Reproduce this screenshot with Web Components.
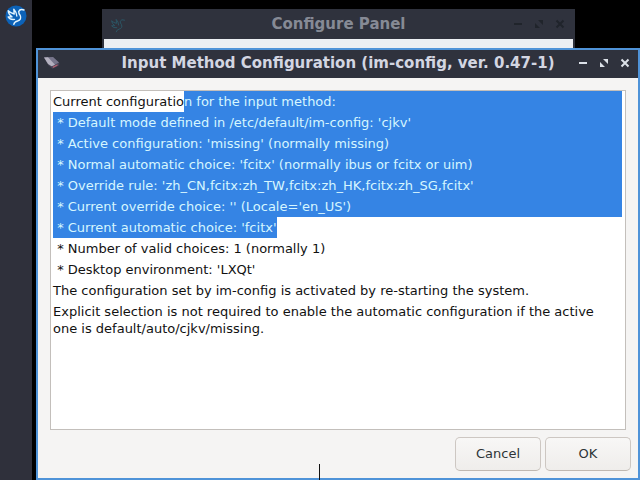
<!DOCTYPE html>
<html lang="en">
<head>
<meta charset="utf-8">
<title>Input Method Configuration</title>
<style>
html, body { height: 100%; margin: 0; }
body { background: #000; overflow: hidden; font: 13px/17px "DejaVu Sans", sans-serif; color: #111; }
</style>
</head>
<body>
<desk-top>
  <side-panel slot="panel"></side-panel>
  <app-window class="back" slot="windows" heading="Configure Panel" inactive>
    <bird-icon slot="icon"></bird-icon>
  </app-window>
  <app-window class="front" slot="windows" heading="Input Method Configuration (im-config, ver. 0.47-1)">
    <config-icon slot="icon"></config-icon>
    <config-dialog></config-dialog>
  </app-window>
</desk-top>

<script>
const define = (name, html, setup) => customElements.define(name, class extends HTMLElement {
  constructor() {
    super();
    const template = document.createElement('template');
    template.innerHTML = html;
    this.attachShadow({ mode: 'open' }).append(template.content.cloneNode(true));
    if (setup) setup(this);
  }
});

define('bird-icon', `
<style>
:host { display: block; width: var(--bird-size, 18px); height: var(--bird-size, 18px); color: var(--bird, #2b5665); }
svg { display: block; width: 100%; height: 100%; }
.disc { fill: var(--disc, none); }
.body { stroke-width: var(--bird-stroke, 1.2); }
</style>
<svg viewBox="0 0 22 22" aria-hidden="true">
  <circle class="disc" cx="11" cy="11" r="10.5"/>
  <path class="body" fill="none" stroke="currentColor" stroke-linecap="round" stroke-linejoin="round" d="M11.8 11Q11.5 7 8.8 4.2L9.2 9Q5.5 8.2 3.2 5.8Q3.5 9.5 7 11.8L3.2 12Q5 15 9.5 14.4M19 5Q15 3.4 13.7 6.5Q13.6 8.5 15.2 10.5Q17 14.6 12.5 16Q9.3 16.8 8.8 19.3"/>
</svg>`);

define('config-icon', `
<style>
:host { display: block; width: 18px; height: 18px; }
svg { display: block; width: 100%; height: 100%; }
</style>
<svg viewBox="0 0 18 18" aria-hidden="true">
  <path d="M1 2.5L10 2 16.5 8 16 10.5 9.5 13.8 5.5 10.5Z" fill="#454355"/>
  <path d="M1 2.5L10 2 16 7.5 9.5 11Z" fill="#77758b"/>
  <path d="M1 2.5L5 2.2 12 9.7 8.5 11.3 5 9Z" fill="#b4b1c0"/>
  <path d="M9.5 11.7L14.5 9.2 14.5 10.7 10 13Z" fill="#b06070"/>
</svg>`);

define('side-panel', `
<style>
:host { display: block; background: #2f303b; padding: 5px 5px 0; width: 22px; --bird: #e4f5ff; --disc: #0c62b8; --bird-size: 22px; --bird-stroke: 1.4; }
button { display: block; border: 0; padding: 0; background: none; }
</style>
<button type="button" aria-label="Application menu"><bird-icon></bird-icon></button>`);

define('desk-top', `
<style>
:host { display: flex; position: relative; height: 100%; overflow: hidden; background: #000; }
::slotted(.back) { position: absolute; left: 102px; right: 65px; top: 9px; bottom: 60px; }
::slotted(.front) { position: absolute; left: 36px; right: 0; top: 48px; bottom: 0; }
.pointer { position: absolute; left: 319px; bottom: 0; width: 1px; height: 16px; background: #111; }
</style>
<slot name="panel"></slot>
<slot name="windows"></slot>
<div class="pointer"></div>`);

define('app-window', `
<style>
:host { display: flex; flex-direction: column; box-sizing: border-box; border: 2px solid #4f93d8; background: #f5f4f3; color: #d3d6e2; }
:host([inactive]) { border-color: #2f323d; background: #eceff3; color: #868a95; --control: #20242b; }
header { display: grid; grid-template-columns: 61px 1fr 61px; align-items: center; height: 28px; background: #2f323d; }
h1 { margin: 0; padding-bottom: 2px; font: bold 15px/17px "DejaVu Sans", sans-serif; text-align: center; white-space: nowrap; }
.icon { padding-left: 5px; }
.controls { display: flex; justify-content: end; gap: 9px; padding: 0 7px 2px 0; }
button { border: 0; padding: 0; width: 12px; height: 12px; background: none; color: var(--control, #dce1e8); }
svg { display: block; width: 12px; height: 12px; }
main { flex: 1; min-height: 0; display: flex; color: #111; }
</style>
<header>
  <div class="icon"><slot name="icon"></slot></div>
  <h1></h1>
  <div class="controls">
    <button type="button" aria-label="Minimize"><svg viewBox="0 0 12 12"><path d="M2 5h8v2H2z" fill="currentColor"/></svg></button>
    <button type="button" aria-label="Maximize"><svg viewBox="0 0 12 12"><path d="M5 2h5v5zM2 5v5h5z" fill="currentColor"/></svg></button>
    <button type="button" aria-label="Close"><svg viewBox="0 0 12 12"><path d="M2.5 2.5l7 7m0-7l-7 7" stroke="currentColor" stroke-width="2"/></svg></button>
  </div>
</header>
<main><slot></slot></main>`, el => {
  el.shadowRoot.querySelector('h1').textContent = el.getAttribute('heading');
});

define('text-line', `
<style>
:host { display: flex; white-space: pre-wrap; }
span { display: block; padding: 2px 0; }
.selected { background: #3584e4; color: #d5f6ff; }
.fill { flex: 1; }
</style>
<span class="plain"></span><span class="selected"></span>`, el => {
  const [plain, selected] = el.shadowRoot.querySelectorAll('span');
  plain.textContent = el.getAttribute('plain') || '';
  selected.textContent = el.getAttribute('selected') || '';
  selected.classList.toggle('fill', el.hasAttribute('fill'));
  if (!plain.textContent) plain.remove();
  if (!selected.textContent) selected.remove();
});

define('dialog-button', `
<style>
:host { display: block; width: 86px; }
button { display: block; width: 100%; height: 34px; padding: 0 0 2px; border: 1px solid #cdc7c2; border-bottom-color: #bfb8b1; border-radius: 5px; background: linear-gradient(#f8f7f6, #efedeb); color: #2e3436; font: inherit; }
</style>
<button type="button"><slot></slot></button>`);

define('config-dialog', `
<style>
:host { flex: 1; display: flex; flex-direction: column; }
.view { flex: 1; margin: 12px 12px 7px; padding: 0 3px 0 2px; border: 1px solid #c3bfbb; background: #fff; }
footer { display: flex; justify-content: end; gap: 4px; padding: 0 7px 7px; }
</style>
<div class="view" role="document">
  <text-line plain="Current configuratio" selected="n for the input method:" fill></text-line>
  <text-line selected=" * Default mode defined in /etc/default/im-config: 'cjkv'" fill></text-line>
  <text-line selected=" * Active configuration: 'missing' (normally missing)" fill></text-line>
  <text-line selected=" * Normal automatic choice: 'fcitx' (normally ibus or fcitx or uim)" fill></text-line>
  <text-line selected=" * Override rule: 'zh_CN,fcitx:zh_TW,fcitx:zh_HK,fcitx:zh_SG,fcitx'" fill></text-line>
  <text-line selected=" * Current override choice: '' (Locale='en_US')" fill></text-line>
  <text-line selected=" * Current automatic choice: 'fcitx'"></text-line>
  <text-line plain=" * Number of valid choices: 1 (normally 1)"></text-line>
  <text-line plain=" * Desktop environment: 'LXQt'"></text-line>
  <text-line plain="The configuration set by im-config is activated by re-starting the system."></text-line>
  <text-line plain="Explicit selection is not required to enable the automatic configuration if the active one is default/auto/cjkv/missing."></text-line>
</div>
<footer>
  <dialog-button>Cancel</dialog-button>
  <dialog-button>OK</dialog-button>
</footer>`);
</script>
</body>
</html>
